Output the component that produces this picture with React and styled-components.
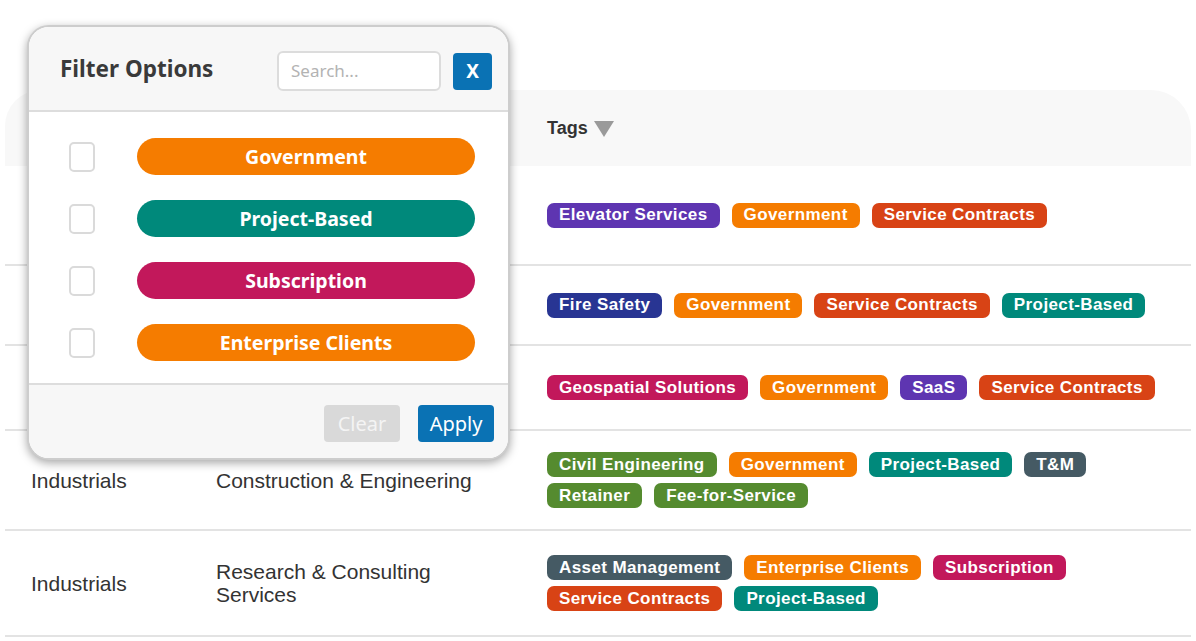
import React from 'react';
import styled, { createGlobalStyle } from 'styled-components';

const GlobalStyle = createGlobalStyle`
  html, body {
    margin: 0;
    padding: 0;
    background: #ffffff;
    font-family: 'Liberation Sans', Arial, sans-serif;
  }
`;

const colors = {
  purple: '#5e35b1',
  orange: '#f57c00',
  deeporange: '#d84315',
  indigo: '#283593',
  teal: '#00897b',
  magenta: '#c2185b',
  green: '#558b2f',
  slate: '#455a64',
};

// first rows sit under the open filter popup, so only their tags show
const rows = [
  {
    sector: '',
    industry: '',
    height: 100,
    tags: [
      ['Elevator Services', 'purple'],
      ['Government', 'orange'],
      ['Service Contracts', 'deeporange'],
    ],
  },
  {
    sector: '',
    industry: '',
    height: 80,
    tags: [
      ['Fire Safety', 'indigo'],
      ['Government', 'orange'],
      ['Service Contracts', 'deeporange'],
      ['Project-Based', 'teal'],
    ],
  },
  {
    sector: '',
    industry: '',
    height: 85,
    tags: [
      ['Geospatial Solutions', 'magenta'],
      ['Government', 'orange'],
      ['SaaS', 'purple'],
      ['Service Contracts', 'deeporange'],
    ],
  },
  {
    sector: 'Industrials',
    industry: 'Construction & Engineering',
    height: 100,
    tags: [
      ['Civil Engineering', 'green'],
      ['Government', 'orange'],
      ['Project-Based', 'teal'],
      ['T&M', 'slate'],
      ['Retainer', 'green'],
      ['Fee-for-Service', 'green'],
    ],
  },
  {
    sector: 'Industrials',
    industry: 'Research & Consulting Services',
    height: 106,
    tags: [
      ['Asset Management', 'slate'],
      ['Enterprise Clients', 'orange'],
      ['Subscription', 'magenta'],
      ['Service Contracts', 'deeporange'],
      ['Project-Based', 'teal'],
    ],
  },
];

const filterOptions = [
  ['Government', 'orange'],
  ['Project-Based', 'teal'],
  ['Subscription', 'magenta'],
  ['Enterprise Clients', 'orange'],
];

function App() {
  return (
    <Page>
      <GlobalStyle />
      <Table>
        <HeaderRow>
          <HeadCell />
          <HeadCell />
          <HeadCell>
            Tags
            <SortArrow />
          </HeadCell>
        </HeaderRow>
        {rows.map((row, i) => (
          <BodyRow key={i} $h={row.height}>
            <Cell>{row.sector}</Cell>
            <Cell $narrow>{row.industry}</Cell>
            <TagCell>
              {row.tags.map(([label, tone]) => (
                <Tag key={label} $bg={colors[tone]}>{label}</Tag>
              ))}
            </TagCell>
          </BodyRow>
        ))}
      </Table>

      <Popup>
        <PopupHeader>
          <PopupTitle>Filter Options</PopupTitle>
          <SearchBox placeholder="Search..." />
          <CloseButton>X</CloseButton>
        </PopupHeader>
        <PopupBody>
          {filterOptions.map(([label, tone]) => (
            <OptionRow key={label}>
              <Checkbox />
              <OptionPill $bg={colors[tone]}>{label}</OptionPill>
            </OptionRow>
          ))}
        </PopupBody>
        <PopupFooter>
          <FooterButton $muted>Clear</FooterButton>
          <FooterButton>Apply</FooterButton>
        </PopupFooter>
      </Popup>
    </Page>
  );
}

export default App;

const Page = styled.div`
  position: relative;
  width: 1196px;
  height: 641px;
  overflow: hidden;
  padding-top: 90px;
  box-sizing: border-box;
`;

const Table = styled.div`
  margin-left: 5px;
  width: 1186px;
  color: #333;
`;

const HeaderRow = styled.div`
  display: grid;
  grid-template-columns: 185px 331px 1fr;
  height: 76px;
  align-items: center;
  background: #f8f8f8;
  border-radius: 36px 40px 0 0;
`;

const HeadCell = styled.div`
  display: flex;
  align-items: center;
  gap: 6px;
  padding-left: 26px;
  font-size: 18px;
  font-weight: bold;
  color: #333;
`;

const SortArrow = styled.span`
  width: 0;
  height: 0;
  border-left: 10px solid transparent;
  border-right: 10px solid transparent;
  border-top: 16px solid #9a9a9a;
  margin-top: 1px;
`;

const BodyRow = styled.div`
  display: grid;
  grid-template-columns: 185px 331px 1fr;
  align-items: center;
  height: ${(p) => p.$h}px;
  box-sizing: border-box;
  border-bottom: 2px solid #e3e3e3;
`;

const Cell = styled.div`
  padding-left: 26px;
  padding-right: ${(p) => (p.$narrow ? '40px' : '10px')};
  font-size: 21px;
  line-height: 23px;
  color: #333;
`;

const TagCell = styled.div`
  display: flex;
  flex-wrap: wrap;
  gap: 6px 12px;
  padding-left: 26px;
  padding-right: 20px;
`;

const Tag = styled.span`
  display: inline-flex;
  align-items: center;
  height: 25px;
  padding: 0 12px;
  border-radius: 7px;
  background: ${(p) => p.$bg};
  color: #fff;
  font-family: 'Liberation Sans', Arial, sans-serif;
  font-weight: bold;
  font-size: 17px;
  letter-spacing: 0.4px;
  white-space: nowrap;
`;

const Popup = styled.div`
  position: absolute;
  left: 27px;
  top: 25px;
  width: 483px;
  height: 435px;
  box-sizing: border-box;
  display: flex;
  flex-direction: column;
  background: #fff;
  border: 2px solid #cdcdcd;
  border-radius: 22px;
  overflow: hidden;
  box-shadow: 0 3px 10px rgba(0, 0, 0, 0.35);
  font-family: 'Noto Sans', 'Liberation Sans', sans-serif;
`;

const PopupHeader = styled.div`
  display: flex;
  align-items: center;
  height: 85px;
  box-sizing: border-box;
  padding: 0 16px 0 31px;
  background: #f7f7f7;
  border-bottom: 2px solid #dddddd;
`;

const PopupTitle = styled.div`
  flex: 1;
  font-size: 22.5px;
  font-weight: bold;
  color: #3a3a3a;
`;

const SearchBox = styled.input`
  width: 164px;
  height: 40px;
  box-sizing: border-box;
  border: 2px solid #dcdcdc;
  border-radius: 6px;
  padding: 0 12px;
  font-family: 'Noto Sans', sans-serif;
  font-size: 17px;
  background: #fff;
  outline: none;
  margin-right: 12px;
  margin-top: 4px;
  &::placeholder {
    color: #b3b3b3;
  }
`;

const CloseButton = styled.button`
  width: 39px;
  height: 37px;
  border: none;
  border-radius: 4px;
  background: #0a72b4;
  color: #fff;
  font-family: 'Noto Sans', sans-serif;
  font-weight: bold;
  font-size: 19px;
  padding: 0;
  margin-top: 5px;
`;

const PopupBody = styled.div`
  flex: 1;
  display: flex;
  flex-direction: column;
  gap: 25px;
  padding: 26px 33px 0 40px;
  background: #fff;
`;

const OptionRow = styled.div`
  display: flex;
  align-items: center;
  gap: 42px;
`;

const Checkbox = styled.span`
  width: 26px;
  height: 30px;
  box-sizing: border-box;
  border: 2px solid #dadada;
  border-radius: 5px;
  background: #fff;
`;

const OptionPill = styled.div`
  flex: 1;
  height: 37px;
  display: flex;
  align-items: center;
  justify-content: center;
  border-radius: 19px;
  background: ${(p) => p.$bg};
  color: #fff;
  font-weight: bold;
  font-size: 19.5px;
`;

const PopupFooter = styled.div`
  display: flex;
  justify-content: flex-end;
  align-items: center;
  gap: 18px;
  height: 75px;
  box-sizing: border-box;
  padding: 4px 14px 0 0;
  background: #f7f7f7;
  border-top: 2px solid #dddddd;
`;

const FooterButton = styled.button`
  width: 76px;
  height: 37px;
  border: none;
  border-radius: 4px;
  padding: 0;
  background: ${(p) => (p.$muted ? '#d9d9d9' : '#0a72b4')};
  color: ${(p) => (p.$muted ? '#f4f4f4' : '#fff')};
  font-family: 'Noto Sans', sans-serif;
  font-size: 20px;
`;
